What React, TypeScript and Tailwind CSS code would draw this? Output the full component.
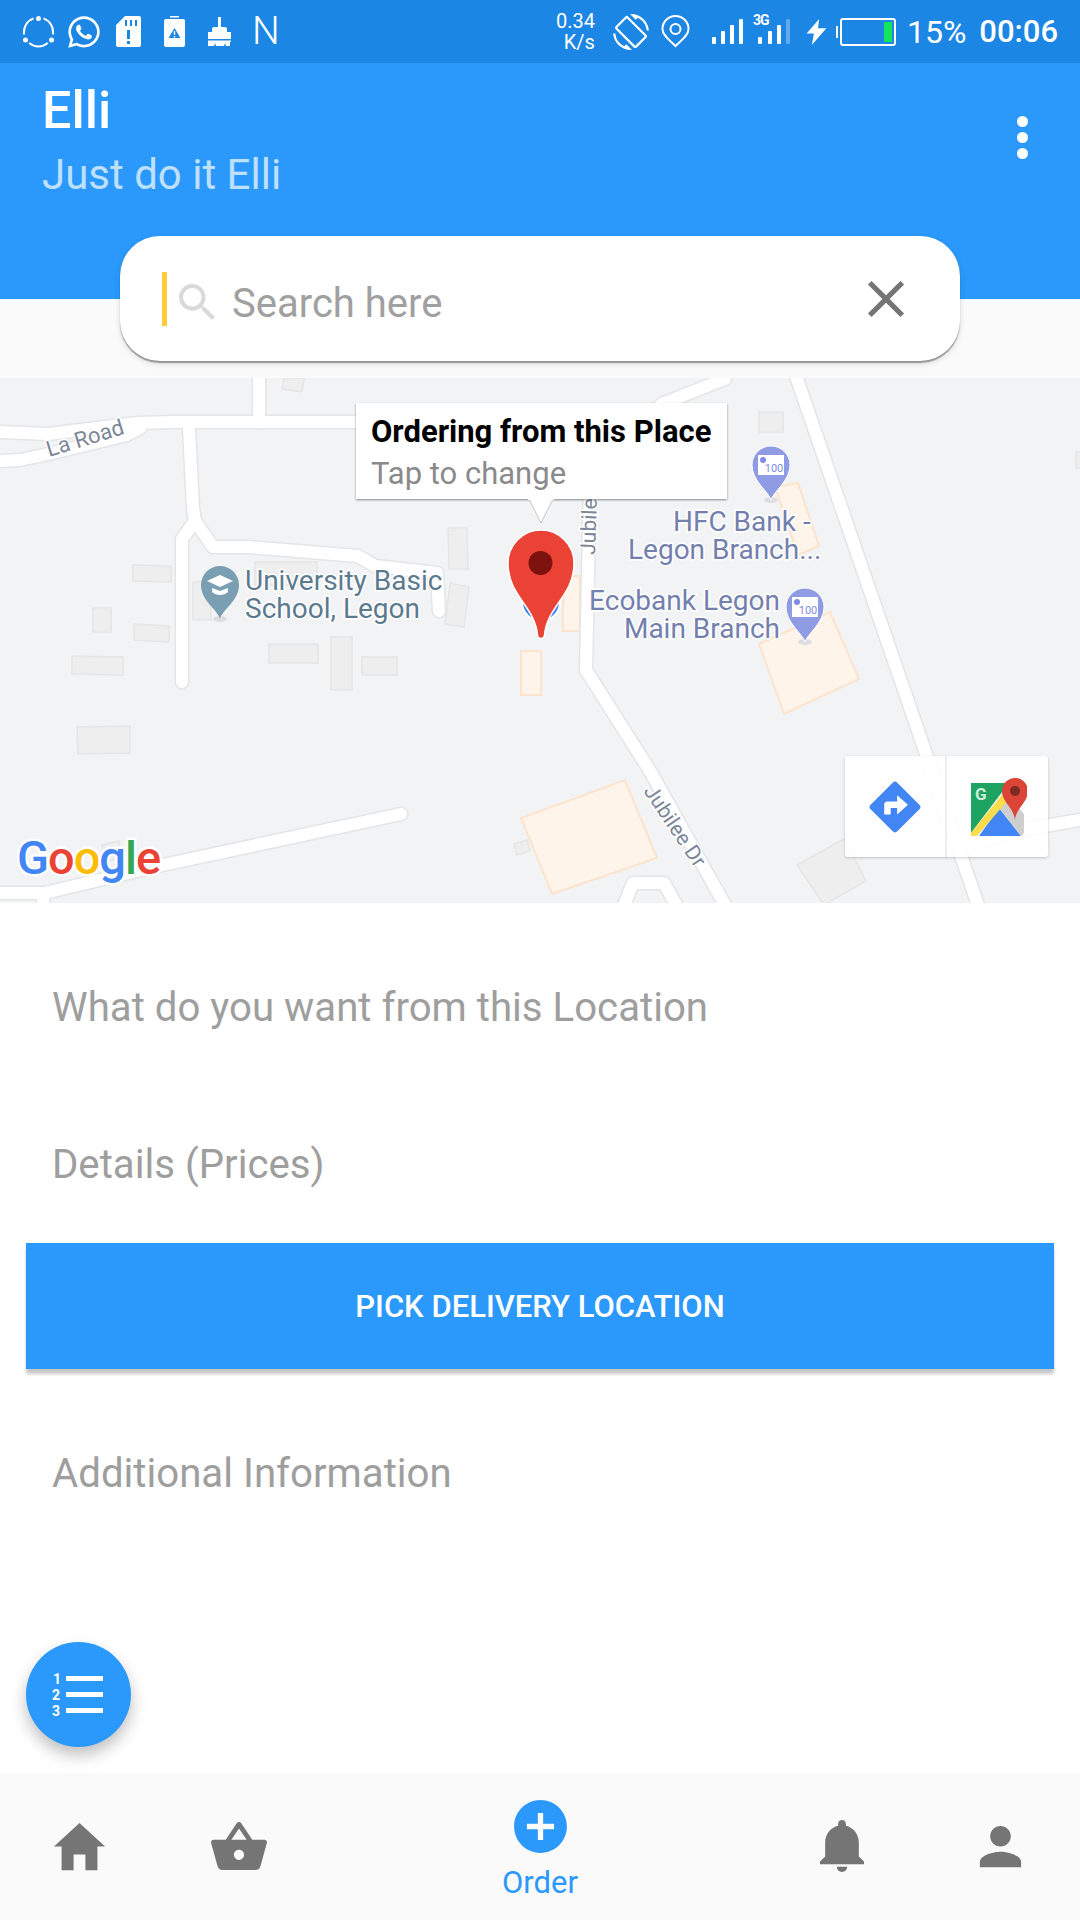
import { FaWhatsapp } from "react-icons/fa";
import {
  IoMdAddCircle,
  IoMdBasket,
  IoMdHome,
  IoMdNotifications,
  IoMdPerson,
  IoMdSearch,
} from "react-icons/io";
import { MdClose, MdScreenRotation } from "react-icons/md";

const roads = [
  "0,432 48,434 138,423 172,422 400,422",
  "0,461 20,460 48,454 127,435 140,428",
  "259,378 259,422",
  "189,428 193,508 195,521 213,547 248,547 358,556 375,566 437,573 439,611",
  "195,521 182,539 182,682",
  "401,814 158,866 45,893 0,893",
  "43,893 43,905",
  "590,480 586,670 650,771 725,905",
  "725,379 664,403 640,420",
  "796,376 978,905",
  "958,848 1000,834 1080,820",
  "622,910 633,883 664,883 679,910",
];

const grayBlocks = [
  "133,565 171,566 171,582 133,581",
  "93,608 111,608 111,632 93,632",
  "134,624 169,626 169,642 134,640",
  "72,656 123,657 123,675 72,674",
  "77,727 130,726 130,753 78,754",
  "269,644 318,644 318,663 269,663",
  "331,637 352,637 352,690 331,690",
  "362,657 397,657 397,675 362,675",
  "448,528 467,528 468,569 449,569",
  "450,583 469,587 464,627 445,624",
  "193,582 211,582 211,620 193,620",
  "255,562 317,562 317,585 255,585",
  "284,378 304,378 302,392 282,389",
  "102,845 119,841 122,858 105,862",
  "514,844 527,840 530,851 517,855",
  "759,412 783,412 783,432 759,432",
  "1076,452 1082,452 1082,468 1076,468",
  "797,865 844,839 866,881 824,905",
];

const orangeBlocks = [
  "775,487 798,483 819,546 798,555",
  "759,644 830,612 859,679 784,714",
  "563,576 580,576 580,631 563,631",
  "521,651 541,651 541,695 521,695",
  "521,818 625,780 657,858 552,894",
];

function BankPin({ x, y }: { x: number; y: number }) {
  return (
    <g>
      <ellipse cx={x} cy={y + 35} rx="7" ry="3" fill="#dcdde0" />
      <path
        d={`M${x} ${y + 35}C${x - 2} ${y + 27} ${x - 19} ${y + 16} ${x - 19} ${y}a19 19 0 0 1 38 0C${x + 19} ${y + 16} ${x + 2} ${y + 27} ${x} ${y + 35}Z`}
        fill="#8f9be3"
        stroke="#fff"
        strokeWidth="1"
      />
      <rect x={x - 13} y={y - 10} width="26" height="20" fill="#fff" />
      <circle cx={x - 8} cy={y - 5} r="3" fill="#7f8de0" />
      <text x={x + 3} y={y + 7} fontSize="11" textAnchor="middle" fill="#7f8de0">
        100
      </text>
    </g>
  );
}

function MapCanvas() {
  const label = { paintOrder: "stroke" as const, stroke: "#fff", strokeWidth: 3 };
  return (
    <svg
      className="block"
      width="1080"
      height="525"
      viewBox="0 378 1080 525"
      style={{ fontFamily: "Roboto, sans-serif" }}
    >
      <rect x="0" y="378" width="1080" height="525" fill="#f2f3f5" />
      {grayBlocks.map((p) => (
        <polygon key={p} points={p} fill="#eeeeee" stroke="#e5e5e5" strokeWidth="1.5" />
      ))}
      {orangeBlocks.map((p) => (
        <polygon key={p} points={p} fill="#fff4ea" stroke="#fde3cb" strokeWidth="2" />
      ))}
      {roads.map((p) => (
        <polyline
          key={p}
          points={p}
          fill="none"
          stroke="#e4e5e7"
          strokeWidth="15"
          strokeLinecap="round"
          strokeLinejoin="round"
        />
      ))}
      {roads.map((p) => (
        <polyline
          key={p + "w"}
          points={p}
          fill="none"
          stroke="#fff"
          strokeWidth="12"
          strokeLinecap="round"
          strokeLinejoin="round"
        />
      ))}

      <text x="49" y="457" fontSize="22" fill="#7c8798" transform="rotate(-17 49 457)" style={label}>
        La Road
      </text>
      <text x="595" y="555" fontSize="21" fill="#7c8798" transform="rotate(-88 595 555)" style={label}>
        Jubilee Dr
      </text>
      <text x="643" y="791" fontSize="21" fill="#7c8798" transform="rotate(56 643 791)" style={label}>
        Jubilee Dr
      </text>

      {/* school marker */}
      <ellipse cx="220" cy="619" rx="7" ry="3" fill="#dcdde0" />
      <path d="M220 619C218 610 201 601 201 585a19 19 0 0 1 38 0C239 601 222 610 220 619Z" fill="#7b9fb2" />
      <path d="M220 575l-13 6 13 6 13-6Z" fill="#fff" />
      <path d="M212 588v4c4 4 12 4 16 0v-4l-8 3Z" fill="#fff" />
      <text x="245" y="590" fontSize="28" fill="#5c7a8e" style={label}>
        University Basic
      </text>
      <text x="245" y="618" fontSize="28" fill="#5c7a8e" style={label}>
        School, Legon
      </text>

      <BankPin x={771} y={465} />
      <BankPin x={805} y={607} />
      <text x="673" y="531" fontSize="28" fill="#7380ae" style={label}>
        HFC Bank -
      </text>
      <text x="628" y="559" fontSize="28" fill="#7380ae" style={label}>
        Legon Branch...
      </text>
      <text x="780" y="610" fontSize="28" fill="#7380ae" textAnchor="end" style={label}>
        Ecobank Legon
      </text>
      <text x="780" y="638" fontSize="28" fill="#7380ae" textAnchor="end" style={label}>
        Main Branch
      </text>

      {/* selected place */}
      <circle cx="541" cy="602" r="19" fill="#4285f4" stroke="#fff" strokeWidth="2" />
      <path
        d="M537.500 635C535 606 508 596 508 563a33 33 0 0 1 66 0C574 596 547 606 544.500 635a3.500 3.500 0 0 1-7 0Z"
        fill="#ea4335"
        stroke="#fff"
        strokeWidth="1.500"
      />
      <circle cx="540.500" cy="563" r="12" fill="#7d120e" />

      {/* google mark */}
      <text x="17" y="874" fontSize="47" fontWeight="500" letterSpacing="-1" stroke="#fff" strokeWidth="5" style={{ paintOrder: "stroke" }}>
        <tspan fill="#4285f4">G</tspan>
        <tspan fill="#ea4335">o</tspan>
        <tspan fill="#fbbc05">o</tspan>
        <tspan fill="#4285f4">g</tspan>
        <tspan fill="#34a853">l</tspan>
        <tspan fill="#ea4335">e</tspan>
      </text>
    </svg>
  );
}

function StatusLeft() {
  return (
    <div className="flex items-center pl-[23px] text-white">
      <svg width="31" height="32" viewBox="0 0 31 32" fill="none" stroke="#fff" strokeWidth="2">
        <path d="M20.500 2.400A14.500 14.500 0 0 1 29.800 18.500M24.800 27.100A14.500 14.500 0 0 1 6.200 27.100M1.200 18.500A14.500 14.500 0 0 1 10.500 2.400" />
        <circle cx="15.500" cy="2.500" r="2.500" fill="#fff" stroke="none" />
        <circle cx="2.500" cy="24" r="2.500" fill="#fff" stroke="none" />
        <circle cx="28.500" cy="24" r="2.500" fill="#fff" stroke="none" />
      </svg>
      <FaWhatsapp className="ml-[12px] w-[36px] h-[36px]" />
      <svg className="ml-[14px]" width="25" height="31" viewBox="0 0 25 31">
        <path
          fillRule="evenodd"
          fill="#fff"
          d="M9 0h14a2 2 0 0 1 2 2v27a2 2 0 0 1-2 2H2a2 2 0 0 1-2-2V9ZM9 4v6h2V4ZM14 4v6h2V4ZM19 4v6h2V4ZM11 14v9h3v-9ZM11 25v3h3v-3Z"
        />
      </svg>
      <svg className="ml-[23px]" width="21" height="31" viewBox="0 0 21 31">
        <rect x="6" y="0" width="9" height="1.500" fill="#fff" />
        <path
          fillRule="evenodd"
          fill="#fff"
          d="M2 3h17a2 2 0 0 1 2 2v24a2 2 0 0 1-2 2H2a2 2 0 0 1-2-2V5a2 2 0 0 1 2-2ZM10.500 12l-6 10h12ZM9.800 15h1.400v4h-1.400ZM9.800 20h1.400v1.400h-1.400Z"
        />
      </svg>
      <svg className="ml-[22px]" width="25" height="29" viewBox="0 0 25 29" fill="#fff">
        <rect x="11" y="0" width="3" height="11" />
        <path d="M7 10h11a2 2 0 0 1 2 2v3H5v-3a2 2 0 0 1 2-2Z" />
        <path d="M1 15h23v10h-1v4h-4l-1-3-1 3H9l-1-3-1 3H1Z" />
        <rect x="1" y="22" width="23" height="1.500" fill="#1c86e5" />
      </svg>
      <span className="ml-[20px] text-[39px] leading-none font-light">N</span>
    </div>
  );
}

function StatusRight() {
  return (
    <div className="ml-auto flex items-center pr-[22px] text-white">
      <div className="w-[44px] flex flex-col items-end text-[20px] leading-[21px] pt-[1px]">
        <span>0.34</span>
        <span>K/s</span>
      </div>
      <MdScreenRotation className="ml-[18px] w-[36px] h-[36px]" />
      <svg className="ml-[12px]" width="29" height="33" viewBox="0 0 29 33" fill="none" stroke="#fff" strokeWidth="2">
        <path d="M14.500 31C10 26 1.500 21 1.500 14a13 13 0 0 1 26 0C27.500 21 19 26 14.500 31Z" />
        <circle cx="14.500" cy="14" r="5" />
      </svg>
      <svg className="ml-[22px]" width="32" height="25" viewBox="0 0 32 25" fill="#fff">
        <rect x="0" y="18" width="4" height="7" rx="1" />
        <rect x="9" y="12" width="4" height="13" rx="1" />
        <rect x="18" y="6" width="4" height="19" rx="1" />
        <rect x="27" y="0" width="4" height="25" rx="1" />
      </svg>
      <svg className="ml-[9px] -mt-[8px]" width="38" height="32" viewBox="0 0 38 32" fill="#fff">
        <text x="0" y="13" fontSize="14" fontWeight="700" letterSpacing="-1">
          3G
        </text>
        <rect x="5" y="25" width="4" height="7" rx="1" />
        <rect x="15" y="19" width="4" height="13" rx="1" />
        <rect x="24" y="13" width="4" height="19" rx="1" />
        <rect x="33" y="7" width="4" height="25" rx="1" opacity="0.3" />
      </svg>
      <svg className="ml-[15px]" width="21" height="26" viewBox="0 0 19 25" fill="#fff">
        <path d="M12 0L0 14h7L5 25 19 9h-8Z" />
      </svg>
      <div className="ml-[9px] flex items-center">
        <div className="w-[2px] h-[12px] bg-white" />
        <div className="ml-[2px] w-[56px] h-[28px] border-[2px] border-white rounded-[3px] flex justify-end items-center pr-[2px]">
          <div className="w-[8px] h-[20px] bg-[#14e35e]" />
        </div>
      </div>
      <span className="ml-[11px] text-[32px] leading-none">15%</span>
      <span className="ml-[13px] text-[31px] leading-none font-medium">00:06</span>
    </div>
  );
}

export default function App() {
  return (
    <div
      className="relative w-[1080px] h-[1920px] overflow-hidden bg-white flex flex-col"
      style={{ fontFamily: "Roboto, sans-serif" }}
    >
      <div className="h-[63px] bg-[#1c86e5] flex items-center shrink-0">
        <StatusLeft />
        <StatusRight />
      </div>

      <div className="h-[236px] bg-[#2a99fb] shrink-0 flex justify-between">
        <div className="pl-[42px] pt-[18px]">
          <div className="text-[52px] leading-[60px] font-medium text-white">Elli</div>
          <div className="text-[42px] leading-[48px] mt-[10px] text-[#bfe0fd]">Just do it Elli</div>
        </div>
        <div className="pr-[52px] pt-[53px] flex flex-col gap-[5px]">
          <div className="w-[11px] h-[11px] rounded-full bg-white" />
          <div className="w-[11px] h-[11px] rounded-full bg-white" />
          <div className="w-[11px] h-[11px] rounded-full bg-white" />
        </div>
      </div>

      <div className="relative h-[79px] bg-[#fafafa] shrink-0">
        <div className="absolute left-[120px] -top-[63px] w-[840px] h-[125px] bg-white rounded-[40px] shadow-[0_2px_1px_rgba(0,0,0,0.35),0_3px_6px_rgba(0,0,0,0.12)] flex items-center pl-[42px] pr-[43px]">
          <div className="w-[5px] h-[54px] bg-[#fdcb3c]" />
          <IoMdSearch className="ml-[6px] mt-[7px] w-[48px] h-[48px] text-[#d9d9d9]" />
          <span className="ml-[11px] mt-[10px] text-[40px] text-[#a0a0a0]">Search here</span>
          <MdClose className="ml-auto w-[62px] h-[62px] text-[#757575]" />
        </div>
      </div>

      <div className="relative h-[525px] shrink-0">
        <MapCanvas />

        <div className="absolute left-[356px] top-[25px]">
          <div className="w-[371px] h-[96px] bg-white shadow-[0_1px_2px_rgba(0,0,0,0.45)] pl-[15px] pt-[9px]">
            <div className="text-[31px] leading-[40px] font-bold text-black">Ordering from this Place</div>
            <div className="text-[31px] leading-[44px] text-[#8a8a8a]">Tap to change</div>
          </div>
          <svg className="absolute left-[172px] top-[96px]" width="26" height="26" viewBox="0 0 26 26">
            <path d="M1 0L13 24L25 0Z" fill="#fff" stroke="#c4c4c4" strokeWidth="1" />
            <rect x="0" y="0" width="26" height="1" fill="#fff" />
          </svg>
        </div>

        <div className="absolute left-[845px] top-[378px] w-[203px] h-[101px] flex bg-white/90 rounded-[3px] shadow-[0_1px_3px_rgba(0,0,0,0.2)]">
          <div className="w-[102px] flex items-center justify-center border-r-[2px] border-[#eeeeee]">
            <svg width="56" height="56" viewBox="0 0 52 52">
              <rect x="8.500" y="8.500" width="35" height="35" rx="3" fill="#4285f4" transform="rotate(45 26 26)" />
              <path d="M16 33v-9a3 3 0 0 1 3-3h9v-6l10 9-10 9v-6h-6v6Z" fill="#fff" />
            </svg>
          </div>
          <div className="flex-1 flex items-center justify-center">
            <svg width="58" height="58" viewBox="0 0 58 58">
              <path d="M2 5h38L2 55Z" fill="#1ea362" />
              <path d="M10 58L30 30L52 58Z" fill="#4285f4" />
              <path d="M30 30L40 18L55 36V52a6 6 0 0 1-3 6Z" fill="#cfcfcf" />
              <path d="M2 55L40 8l6 6L8 58H2Z" fill="#fbdc4c" />
              <text x="6" y="22" fontSize="17" fontWeight="700" fill="#cdeedb">
                G
              </text>
              <path d="M46 42C45 30 33 24 33 13a13 13 0 0 1 26 0C59 24 47 30 46 42Z" fill="#db4437" />
              <circle cx="46" cy="13" r="5" fill="#7d2a22" />
            </svg>
          </div>
        </div>
      </div>

      <div className="flex-1 flex flex-col bg-white">
        <div className="mt-[82px] px-[52px] text-[40.2px] leading-[46px] text-[#9e9e9e]">
          What do you want from this Location
        </div>
        <div className="mt-[111px] px-[52px] text-[40.2px] leading-[46px] text-[#9e9e9e]">Details (Prices)</div>
        <div className="mt-[55px] mx-[26px] h-[126px] bg-[#2a99fb] flex items-center justify-center shadow-[0_5px_3px_rgba(0,0,0,0.22)]">
          <span className="text-[31px] mt-[3px] font-medium text-white">PICK DELIVERY LOCATION</span>
        </div>
        <div className="mt-[82px] px-[52px] text-[40.2px] leading-[46px] text-[#9e9e9e]">Additional Information</div>
      </div>

      <div className="absolute left-[26px] top-[1642px] w-[105px] h-[105px] rounded-full bg-[#2a99fb] shadow-[0_8px_16px_rgba(0,0,0,0.25)] flex items-center justify-center">
        <svg width="54" height="54" viewBox="0 0 54 54" fill="#fff">
          <text x="1" y="16" fontSize="14" fontWeight="700">
            1
          </text>
          <text x="0" y="32" fontSize="14" fontWeight="700">
            2
          </text>
          <text x="0" y="48" fontSize="14" fontWeight="700">
            3
          </text>
          <rect x="14" y="8" width="37" height="5" />
          <rect x="14" y="24" width="37" height="5" />
          <rect x="14" y="40" width="37" height="5" />
        </svg>
      </div>

      <div className="h-[147px] bg-[#fafafa] shrink-0 flex">
        <div className="w-[159px] flex justify-center pt-[42px]">
          <IoMdHome className="w-[63px] h-[63px] text-[#757575]" />
        </div>
        <div className="w-[159px] flex justify-center pt-[41px]">
          <IoMdBasket className="w-[64px] h-[64px] text-[#757575]" />
        </div>
        <div className="flex-1 flex flex-col items-center pt-[21px]">
          <IoMdAddCircle className="w-[65px] h-[65px] text-[#2a99fb]" />
          <span className="text-[31px] leading-[34px] mt-[7px] text-[#2a99fb]">Order</span>
        </div>
        <div className="w-[159px] flex justify-center pt-[41px]">
          <IoMdNotifications className="w-[64px] h-[64px] text-[#757575]" />
        </div>
        <div className="w-[159px] flex justify-center pt-[46px]">
          <IoMdPerson className="w-[55px] h-[55px] text-[#757575]" />
        </div>
      </div>
    </div>
  );
}
